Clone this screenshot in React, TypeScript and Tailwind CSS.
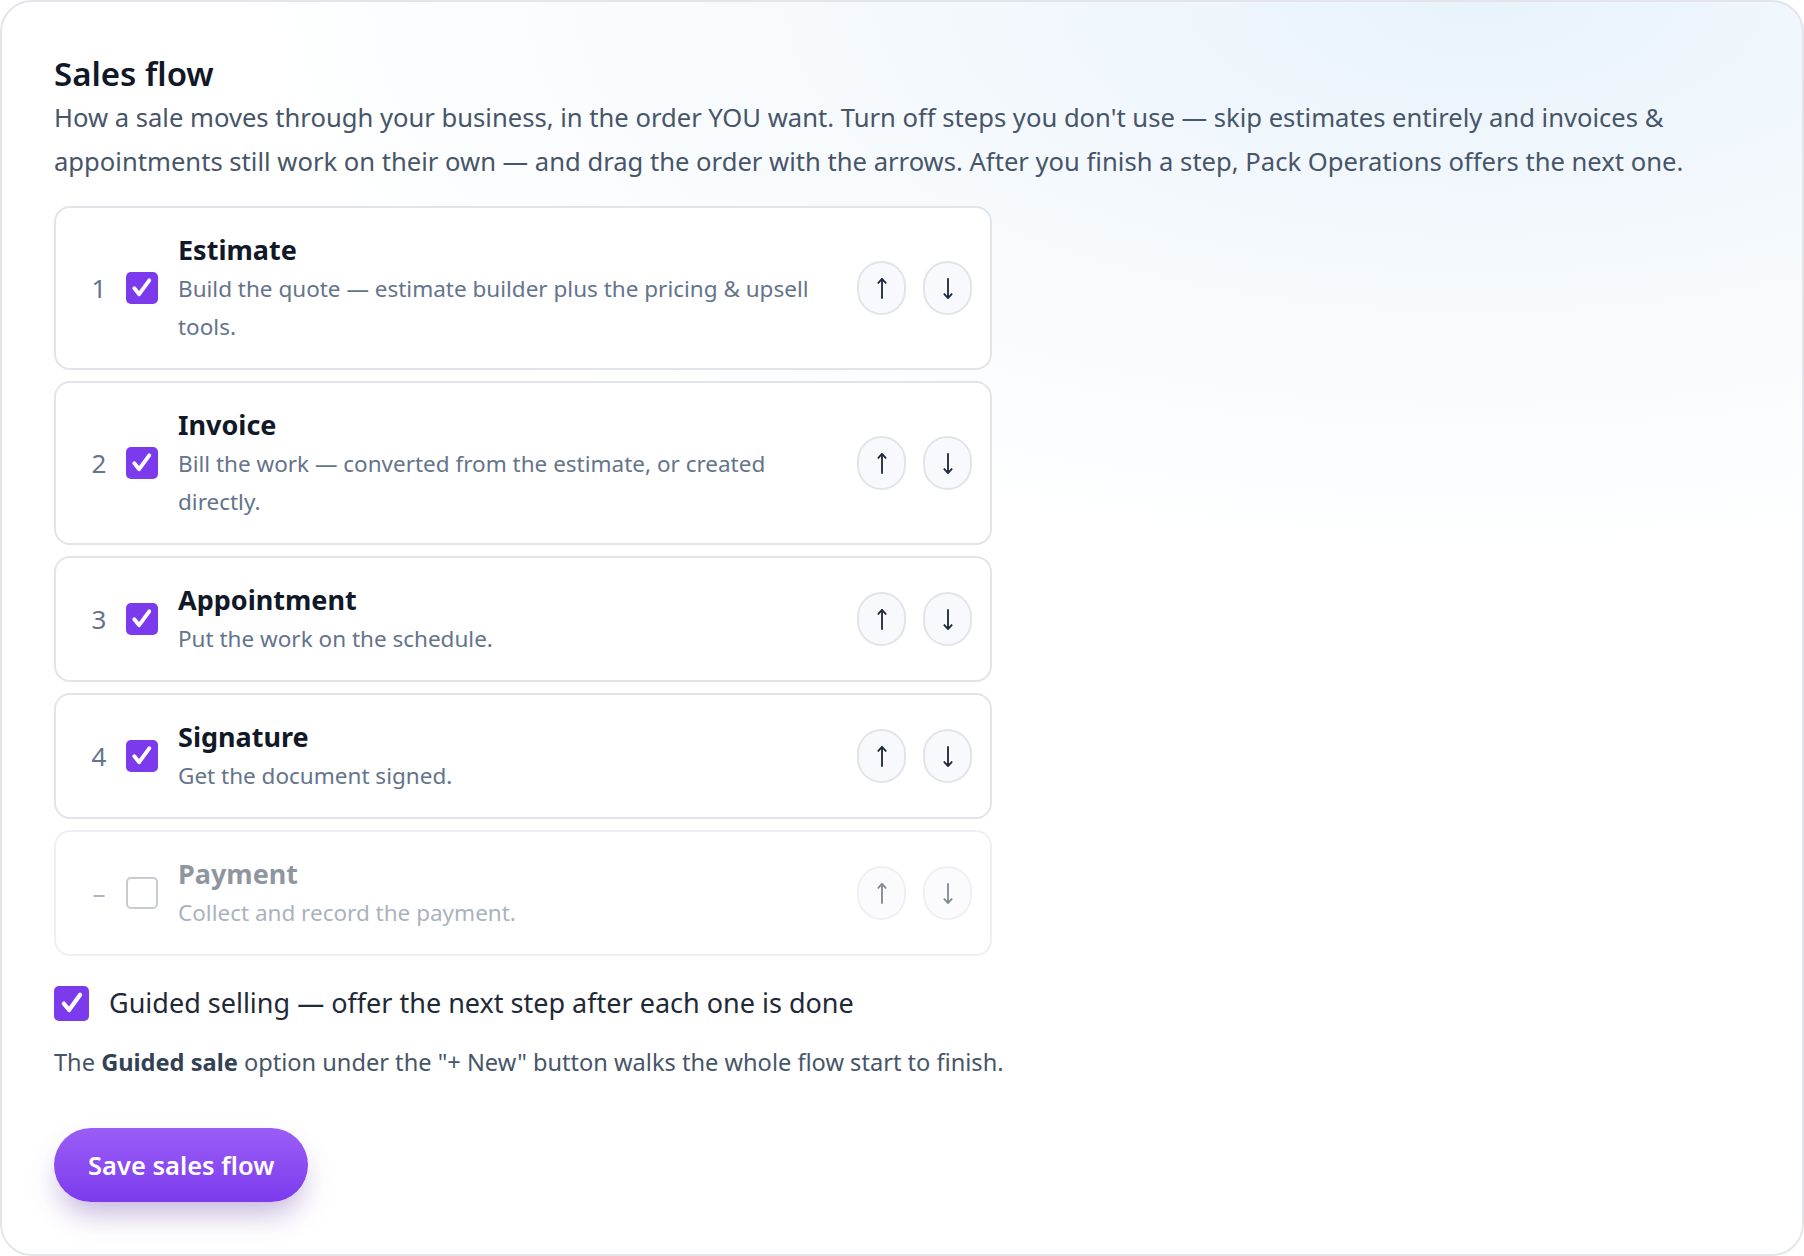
import { useState } from 'react';

interface Step {
  id: string;
  title: string;
  desc: string;
  enabled: boolean;
}

const initialSteps: Step[] = [
  { id: 'estimate', title: 'Estimate', desc: 'Build the quote — estimate builder plus the pricing & upsell tools.', enabled: true },
  { id: 'invoice', title: 'Invoice', desc: 'Bill the work — converted from the estimate, or created directly.', enabled: true },
  { id: 'appointment', title: 'Appointment', desc: 'Put the work on the schedule.', enabled: true },
  { id: 'signature', title: 'Signature', desc: 'Get the document signed.', enabled: true },
  { id: 'payment', title: 'Payment', desc: 'Collect and record the payment.', enabled: false },
];

const CheckBox = ({ checked, size }: { checked: boolean; size: string }) => (
  <span
    className={`${size} flex shrink-0 items-center justify-center rounded-[5px] ${
      checked ? 'bg-[#7c3aed]' : 'border-2 border-[#9ca3af] bg-white'
    }`}
  >
    {checked && (
      <svg viewBox="0 0 24 24" className="h-[80%] w-[80%]" fill="none" stroke="white" strokeWidth="3.6" strokeLinecap="round" strokeLinejoin="round">
        <path d="M5 12.5l4.5 5.5L19 5" />
      </svg>
    )}
  </span>
);

const Arrow = ({ down }: { down?: boolean }) => (
  <svg viewBox="0 0 12 24" className={`h-[23px] w-[12px] ${down ? 'rotate-180' : ''}`} fill="none" stroke="#1e293b" strokeWidth="1.9" strokeLinecap="round" strokeLinejoin="round">
    <path d="M6 2V22M2.2 6.2L6 2l3.8 4.2" />
  </svg>
);

const App = () => {
  const [steps, setSteps] = useState<Step[]>(initialSteps);
  const [guided, setGuided] = useState(true);

  const toggle = (id: string) =>
    setSteps(s => s.map(st => (st.id === id ? { ...st, enabled: !st.enabled } : st)));

  const move = (i: number, dir: number) => {
    const j = i + dir;
    if (j < 0 || j >= steps.length) return;
    const next = [...steps];
    [next[i], next[j]] = [next[j], next[i]];
    setSteps(next);
  };

  let n = 0;

  return (
    <div className="h-screen w-full font-['Noto_Sans','Open_Sans',sans-serif]">
      <div className="h-full w-full rounded-[32px] border-2 border-[#e3e5ea] bg-[radial-gradient(ellipse_70%_45%_at_82%_0%,#e9f3fb_0%,#f4f9fd_45%,#ffffff_100%)] px-[52px] pt-[50px]">
        <h2 className="text-[33px] leading-[44px] font-semibold text-[#111827]">Sales flow</h2>
        <p className="text-[25.6px] leading-[44px] text-[#475569]">
          How a sale moves through your business, in the order YOU want. Turn off steps you don't use — skip estimates entirely and invoices &amp; appointments still work on their own — and drag the order with the arrows. After you finish a step, Pack Operations offers the next one.
        </p>

        <div className="mt-[22px] flex w-[938px] flex-col gap-[11px]">
          {steps.map((st, i) => {
            if (st.enabled) n += 1;
            return (
              <div
                key={st.id}
                className={`flex items-center rounded-2xl border-2 border-[#e2e4ea] bg-white py-[22px] pl-[33px] pr-[18px] ${
                  st.enabled ? '' : 'opacity-55'
                }`}
              >
                <span className="w-[20px] text-center text-[26px] text-[#64748b]">{st.enabled ? n : '–'}</span>
                <button type="button" onClick={() => toggle(st.id)} className="ml-[17px]">
                  <CheckBox checked={st.enabled} size="h-[32px] w-[32px]" />
                </button>
                <div className="ml-[20px] flex-1 pr-[20px]">
                  <div className={`text-[27px] leading-[40px] font-bold ${st.enabled ? 'text-[#111827]' : 'text-[#374151]'}`}>
                    {st.title}
                  </div>
                  <div className="text-[22.5px] leading-[38px] text-[#64748b]">{st.desc}</div>
                </div>
                <div className="flex gap-[17px]">
                  <button
                    type="button"
                    onClick={() => move(i, -1)}
                    className="flex h-[54px] w-[49px] items-center justify-center rounded-full border-2 border-[#e2e4ea] bg-[#f8f9fc]"
                  >
                    <Arrow />
                  </button>
                  <button
                    type="button"
                    onClick={() => move(i, 1)}
                    className="flex h-[54px] w-[49px] items-center justify-center rounded-full border-2 border-[#e2e4ea] bg-[#f8f9fc]"
                  >
                    <Arrow down />
                  </button>
                </div>
              </div>
            );
          })}
        </div>

        <label className="mt-[27px] flex cursor-pointer items-center gap-[20px]" onClick={() => setGuided(g => !g)}>
          <CheckBox checked={guided} size="h-[35px] w-[35px]" />
          <span className="text-[27px] leading-[40px] text-[#1f2937]">Guided selling — offer the next step after each one is done</span>
        </label>

        <p className="mt-[21px] text-[23.6px] leading-[36px] text-[#475569]">
          The <b className="font-bold text-[#334155]">Guided sale</b> option under the "+ New" button walks the whole flow start to finish.
        </p>

        <button
          type="button"
          className="mt-[48px] h-[74px] rounded-full bg-gradient-to-b from-[#9b5df6] to-[#7c3aed] px-[34px] text-[25.5px] font-semibold text-white shadow-[0_16px_30px_-6px_rgba(76,29,149,0.35)]"
        >
          Save sales flow
        </button>
      </div>
    </div>
  );
};

export default App;
